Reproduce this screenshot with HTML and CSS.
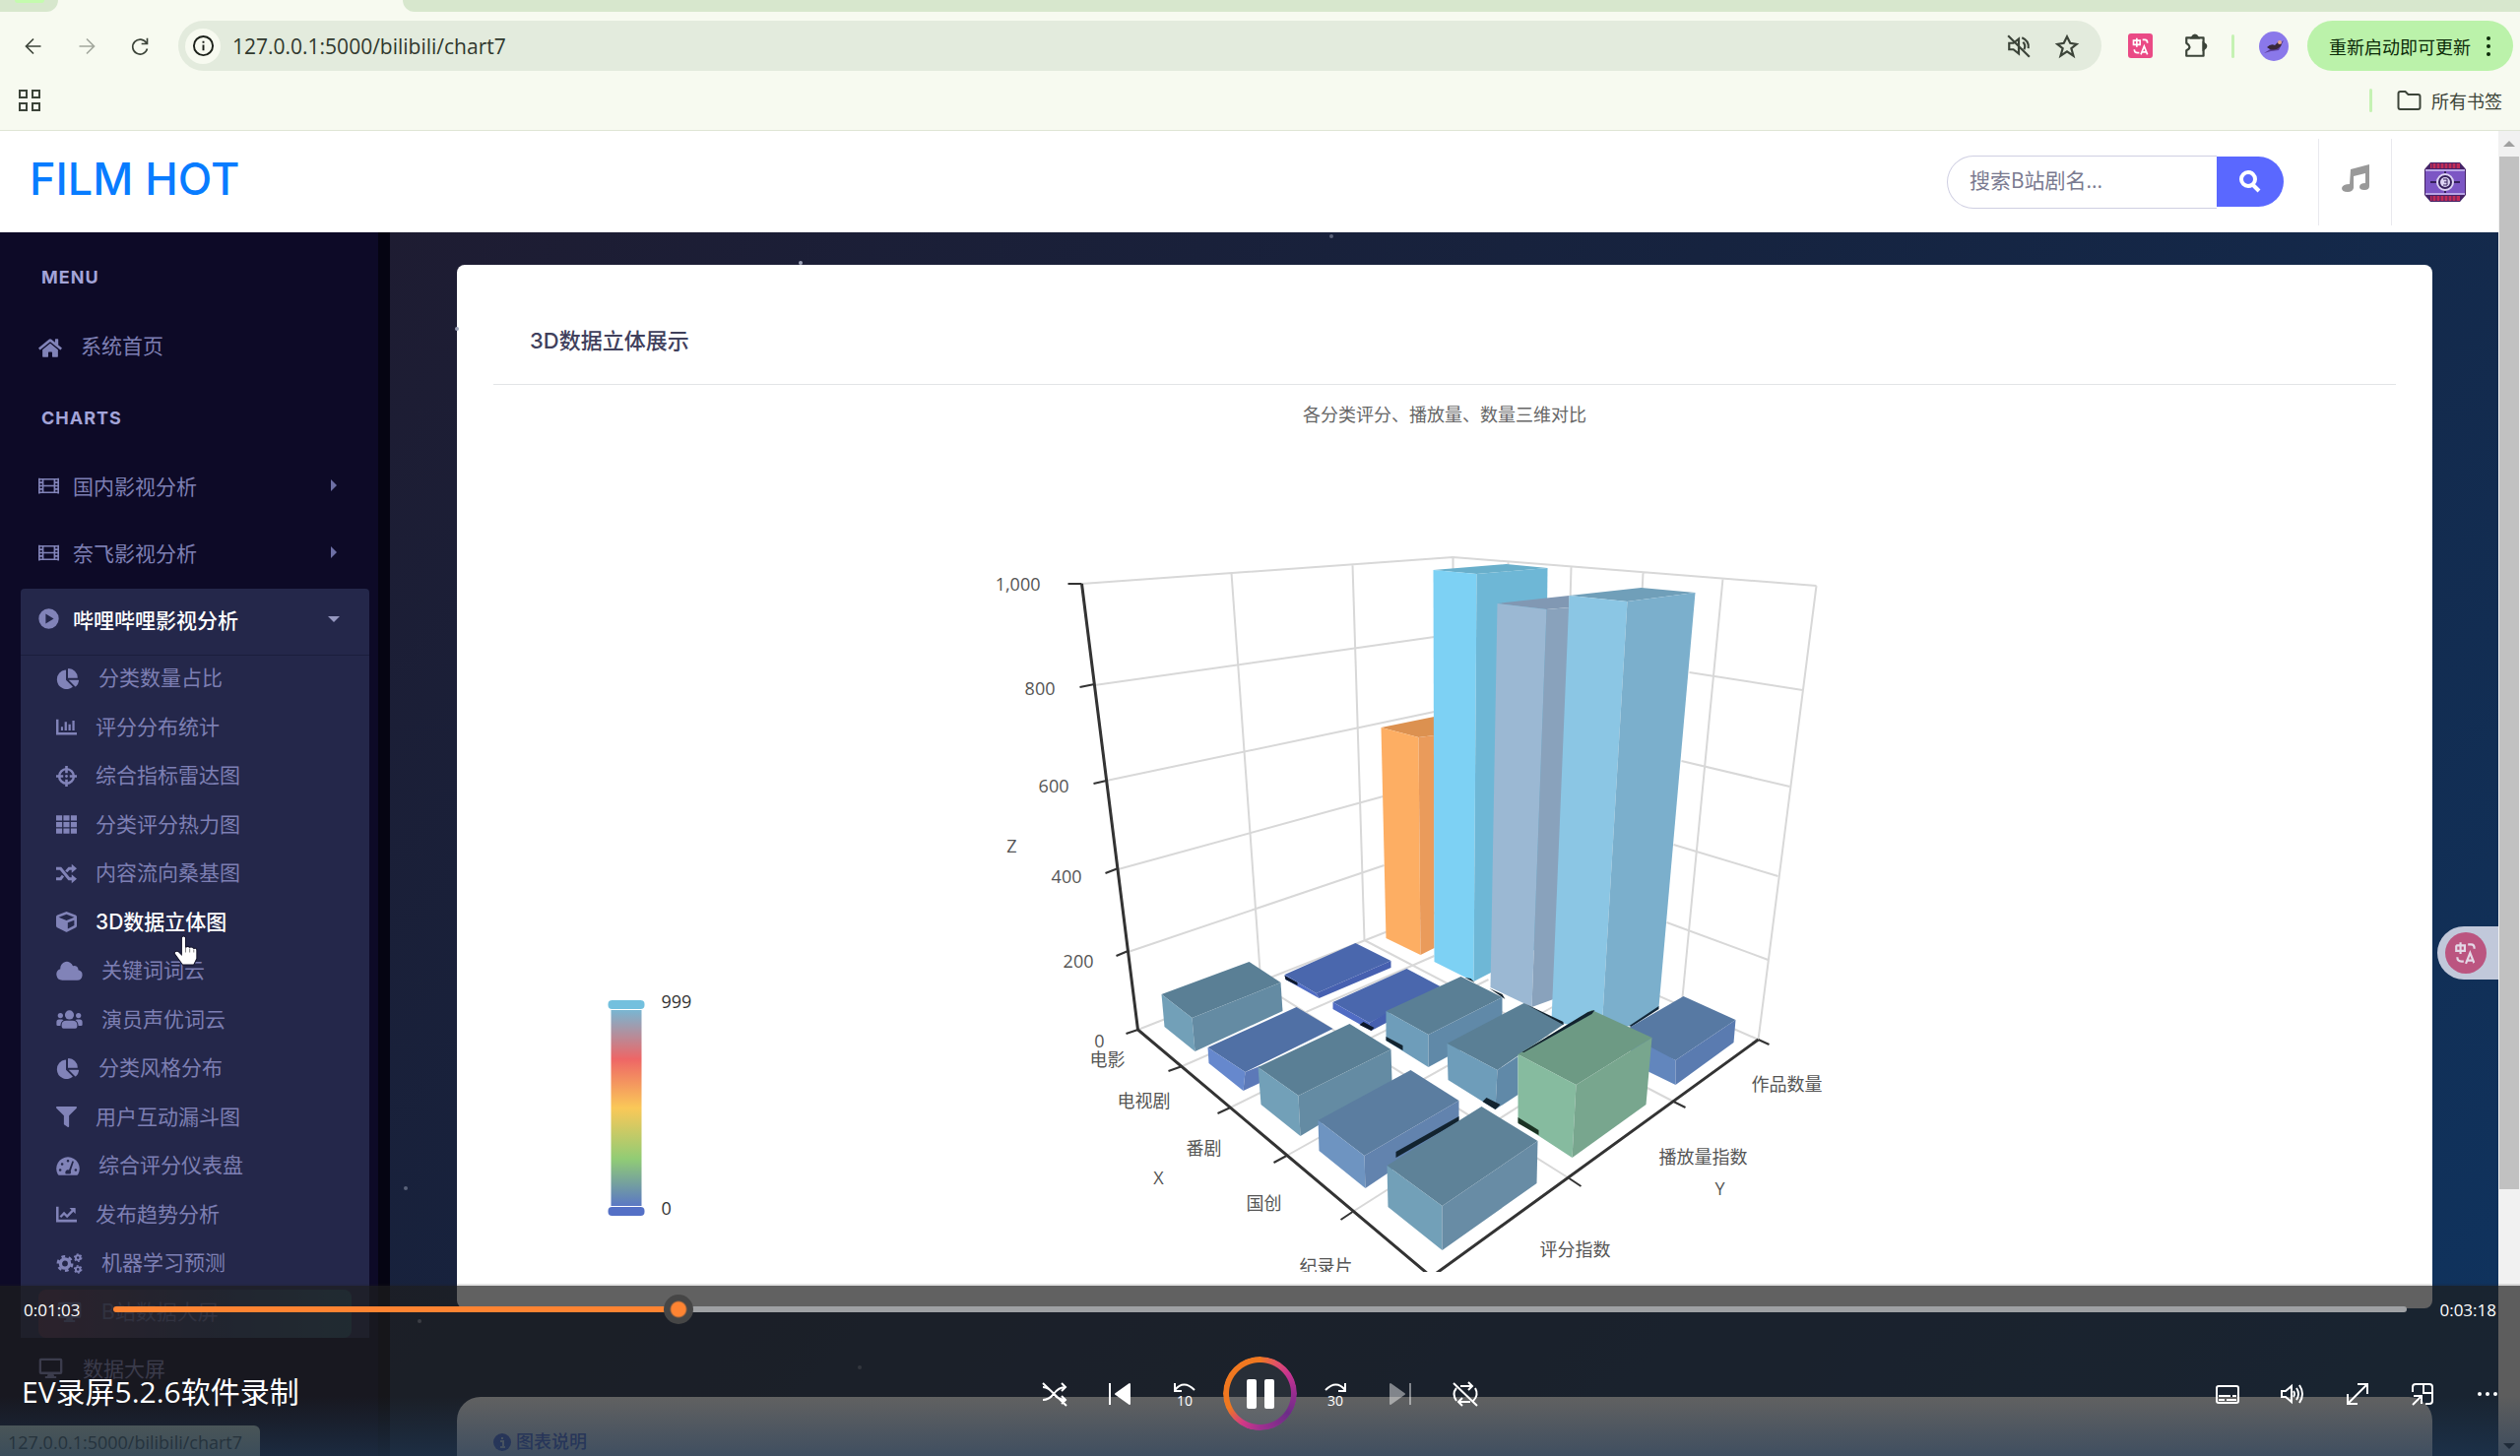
FILE: index.html
```html
<!DOCTYPE html>
<html lang="zh-CN">
<head>
<meta charset="utf-8">
<title>FILM HOT</title>
<link rel="stylesheet" href="styles.css">
</head>
<body>
<svg class="defs" aria-hidden="true">
  <symbol id="home" viewBox="0 0 576 512"><path d="M280 148 96 300v164a16 16 0 0 0 16 16h112a16 16 0 0 0 16-16v-96a16 16 0 0 1 16-16h64a16 16 0 0 1 16 16v96a16 16 0 0 0 16 16h112a16 16 0 0 0 16-16V300L296 148a12 12 0 0 0-16 0zM572 251l-84-69V44a12 12 0 0 0-12-12h-56a12 12 0 0 0-12 12v72l-90-74a48 48 0 0 0-61 0L4 251a12 12 0 0 0-1 17l25 31a12 12 0 0 0 17 2L280 107a12 12 0 0 1 16 0l235 194a12 12 0 0 0 17-2l25-31a12 12 0 0 0-1-17z"/></symbol>
  <symbol id="film" viewBox="0 0 512 512"><path fill="none" stroke="currentColor" stroke-width="40" d="M20 64v384M492 64v384M112 84v344M400 84v344M20 92h472M20 420h472M112 256h288M20 174h92M20 256h92M20 338h92M400 174h92M400 256h92M400 338h92"/></symbol>
  <symbol id="play" viewBox="0 0 512 512"><path fill-rule="evenodd" d="M256 8a248 248 0 1 0 0 496 248 248 0 0 0 0-496zM180 136v240l200-120z"/></symbol>
  <symbol id="pie" viewBox="0 0 544 512"><path d="M528 288H290l158 158c6 6 16 7 22 1a240 240 0 0 0 73-142c2-9-6-17-15-17zM512 223A240 240 0 0 0 289 0c-9-1-17 7-17 16v224h224c9 0 17-8 16-17zM224 288V50c0-9-8-17-17-15A240 240 0 0 0 0 280a240 240 0 0 0 383 184c7-5 8-16 1-22z"/></symbol>
  <symbol id="bar" viewBox="0 0 512 512"><path d="M0 64h60v324h452v60H0zM120 250h50v90h-50zM210 130h56v210h-56zM305 190h56v150h-56zM400 96h56v244h-56z"/></symbol>
  <symbol id="target" viewBox="0 0 512 512"><path d="M256 76a180 180 0 1 0 0 360 180 180 0 0 0 0-360z" fill="none" stroke="currentColor" stroke-width="60"/><path d="M224 0h64v176h-64zM224 336h64v176h-64zM0 224h176v64H0zM336 224h176v64H336z"/><circle cx="256" cy="256" r="34"/></symbol>
  <symbol id="grid" viewBox="0 0 512 512"><path d="M0 32h149v128H0zM181 32h149v128H181zM363 32h149v128H363zM0 192h149v128H0zM181 192h149v128H181zM363 192h149v128H363zM0 352h149v128H0zM181 352h149v128H181zM363 352h149v128H363z"/></symbol>
  <symbol id="shuffle" viewBox="0 0 512 512"><path fill="none" stroke="currentColor" stroke-width="70" d="M0 128h110l210 256h90M0 384h110l60-74M250 204l70-76h90"/><path d="M384 20l128 108-128 108zM384 276l128 108-128 108z"/></symbol>
  <symbol id="cube" viewBox="0 0 512 512"><path fill-rule="evenodd" d="M239 6 31 84a48 48 0 0 0-31 45v225a48 48 0 0 0 27 43l208 104a48 48 0 0 0 43 0l208-104a48 48 0 0 0 26-43V129a48 48 0 0 0-31-45L273 6a48 48 0 0 0-34 0zM256 68l192 72v1l-192 78-192-78v-1zM288 424V276l160-65v133z"/></symbol>
  <symbol id="cloud" viewBox="0 0 640 512"><path d="M538 227A96 96 0 0 0 406 128 160 160 0 0 0 96 200 144 144 0 0 0 144 480h368a128 128 0 0 0 26-253z"/></symbol>
  <symbol id="users" viewBox="0 0 640 512"><circle cx="320" cy="144" r="112"/><circle cx="96" cy="160" r="64"/><circle cx="544" cy="160" r="64"/><path d="M128 432v-45c0-62 50-99 112-99h160c62 0 112 37 112 99v45a48 48 0 0 1-48 48H176a48 48 0 0 1-48-48zM0 384v-64a64 64 0 0 1 64-64h64c18 0 34 7 45 19-40 22-68 60-75 141H32a32 32 0 0 1-32-32zM640 384v-64a64 64 0 0 0-64-64h-64c-18 0-34 7-45 19 40 22 68 60 75 141h66a32 32 0 0 0 32-32z"/></symbol>
  <symbol id="filter" viewBox="0 0 512 512"><path d="M488 0H24C3 0-8 26 7 41l185 185v206c0 8 4 15 10 20l80 55c16 11 38 0 38-19V226L505 41c15-15 4-41-17-41z"/></symbol>
  <symbol id="gauge" viewBox="0 0 576 512"><path fill-rule="evenodd" d="M288 32A288 288 0 0 0 39 464c6 10 17 16 28 16h442c11 0 22-6 28-16A288 288 0 0 0 288 32zM288 96a32 32 0 1 1 0 64 32 32 0 0 1 0-64zM96 384a32 32 0 1 1 0-64 32 32 0 0 1 0 64zM144 240a32 32 0 1 1 0-64 32 32 0 0 1 0 64zM480 384a32 32 0 1 1 0-64 32 32 0 0 1 0 64zM392 138a22 22 0 0 1 38 14l-75 226a64 64 0 0 1-12 70H233a64 64 0 0 1 80-92z"/></symbol>
  <symbol id="line" viewBox="0 0 512 512"><path d="M0 64h62v322h450v62H0z"/><path fill="none" stroke="currentColor" stroke-width="58" d="M106 322l90-92 76 76 140-146"/><path d="M330 96h134c9 0 16 7 16 16v134z"/></symbol>
  <symbol id="gears" viewBox="0 0 640 512"><g fill="none" stroke="currentColor"><circle cx="210" cy="256" r="112" stroke-width="82"/><circle cx="210" cy="256" r="176" stroke-width="62" stroke-dasharray="92 92"/><circle cx="532" cy="112" r="56" stroke-width="48"/><circle cx="532" cy="112" r="88" stroke-width="34" stroke-dasharray="46 46"/><circle cx="532" cy="400" r="56" stroke-width="48"/><circle cx="532" cy="400" r="88" stroke-width="34" stroke-dasharray="46 46"/></g></symbol>
  <symbol id="screen" viewBox="0 0 576 512"><path fill-rule="evenodd" d="M48 16h480a48 48 0 0 1 48 48v300a48 48 0 0 1-48 48H360l16 50h50v50H150v-50h50l16-50H48a48 48 0 0 1-48-48V64a48 48 0 0 1 48-48zM56 72v284h464V72z"/></symbol>
  <symbol id="translate" viewBox="0 0 24 24"><g fill="none" stroke="currentColor" stroke-width="2"><path d="M3 5h8v5H3zM7 2v11M14 4h3q3 0 3 4M4 16q0 4 4 4h2"/><path d="M12 22l4-10 4 10M13 19h6"/></g></symbol>
</svg>

<div class="browser">
  <div class="tabs"><span class="tab-prev"></span><span class="tab-active"></span><span class="tab-rest"></span></div>
  <div class="toolbar">
    <button class="nav-btn" aria-label="后退"><svg viewBox="0 0 24 24"><path d="M21 12H4M12 3l-9 9 9 9"/></svg></button>
    <button class="nav-btn dim" aria-label="前进"><svg viewBox="0 0 24 24"><path d="M3 12h17M12 3l9 9-9 9"/></svg></button>
    <button class="nav-btn" aria-label="刷新"><svg viewBox="0 0 24 24"><path d="M20 8a9 9 0 1 0 1 7M21 2v7h-7"/></svg></button>
    <div class="omnibox">
      <span class="info"><svg viewBox="0 0 24 24"><circle cx="12" cy="12" r="10"/><path d="M12 11v6M12 7v2"/></svg></span>
      <input class="url" aria-label="地址" value="127.0.0.1:5000/bilibili/chart7">
      <button aria-label="静音"><svg viewBox="0 0 24 24"><path d="M2 2l20 20M3 9h4l5-4v14l-5-4H3zM15 4q7 3 6 10M16 8q3 3 1 7"/></svg></button>
      <button aria-label="收藏"><svg viewBox="0 0 24 24"><path d="M12 3l3 6 6 1-5 4 2 7-6-4-6 4 2-7-5-4 6-1z"/></svg></button>
    </div>
    <button class="ext" aria-label="翻译"><svg><use href="#translate"/></svg></button>
    <button class="puzzle" aria-label="扩展程序"><svg viewBox="0 0 24 24"><path d="M3 4h16v17H3v-5q6-3 0-7z" stroke-linejoin="round"/><path d="M8 4q3-5 6 0zM19 9q5 3 0 6z" fill="currentColor"/></svg></button>
    <span class="sep"></span>
    <button class="profile" aria-label="用户"><svg viewBox="0 0 30 30"><circle cx="15" cy="15" r="15" fill="#8a78ea"/><path d="M5 22l8-5 12-8-5 10-8 1z" fill="#5a3e9a"/><path d="M8 16q4-4 8-2l4-4q4 2 2 5-5 5-11 3z" fill="#3a2838"/><circle cx="21" cy="11" r="2" fill="#e6a890"/></svg></button>
    <button class="update"><span>重新启动即可更新</span><svg viewBox="0 0 6 24"><circle cx="3" cy="4" r="2"/><circle cx="3" cy="12" r="2"/><circle cx="3" cy="20" r="2"/></svg></button>
  </div>
  <div class="bookmarks">
    <button class="apps" aria-label="应用"><svg viewBox="0 0 22 22"><path d="M1 1h7v7H1zM14 1h7v7h-7zM1 14h7v7H1zM14 14h7v7h-7z"/></svg></button>
    <span class="sep"></span>
    <button class="all"><svg viewBox="0 0 25 20"><path d="M2 3q0-2 2-2h5l3 3h10q2 0 2 2v11q0 2-2 2H4q-2 0-2-2z"/></svg>所有书签</button>
  </div>
</div>

<div class="viewport">
  <div class="page">
    <header class="header">
      <a class="logo" href="#">FILM HOT</a>
      <form class="search"><input aria-label="搜索" placeholder="搜索B站剧名..."><button type="button" aria-label="搜索"><svg viewBox="0 0 24 24"><circle cx="10" cy="9" r="7"/><path d="M15 15l6 6"/></svg></button></form>
      <a class="music" href="#" aria-label="音乐"><svg viewBox="0 0 28 28"><path d="M9 5 28 0v22q0 4-5 4-5 0-5-3 0-4 6-4V9l-12 3v12q-1 4-6 4-6 0-6-4 1-4 8-4z"/></svg></a>
      <a class="user" href="#" aria-label="个人"><svg viewBox="0 0 42 40"><path d="M6 0h30l6 7v26l-6 7H6l-6-7V7z" fill="#452266"/><path d="M6 1h30v5H6zM6 34h30v5H6z" fill="#c22c58"/><path d="M8 1v5m4-5v5m4-5v5m4-5v5m4-5v5m4-5v5m4-5v5M8 34v5m4-5v5m4-5v5m4-5v5m4-5v5m4-5v5m4-5v5" stroke="#452266"/><path d="M1 7h40v26H1z" fill="#b9a6e6"/><path d="M1 9h40v22H1z" fill="#7c56c4"/><path d="M6 20h30M21 9v22" stroke="#35205c" stroke-width="2"/><circle cx="21" cy="20" r="8" fill="#35205c" stroke="#ddd4f3" stroke-width="2"/><circle cx="21" cy="20" r="5" fill="#ddd4f3"/><path d="M19 17h4v6h-4m1-3h3" stroke="#35205c" fill="none"/></svg></a>
    </header>
    <div class="body">
      <nav class="sidebar">
        <h2>MENU</h2>
        <a class="item home" href="#"><svg class="w24"><use href="#home"/></svg><span>系统首页</span></a>
        <h2>CHARTS</h2>
        <a class="item group" href="#"><svg><use href="#film"/></svg><span>国内影视分析</span><i class="right"></i></a>
        <a class="item group" href="#"><svg><use href="#film"/></svg><span>奈飞影视分析</span><i class="right"></i></a>
        <a class="item group open" href="#"><svg><use href="#play"/></svg><span>哔哩哔哩影视分析</span><i class="down"></i></a>
        <div class="sub">
          <a href="#"><svg class="w24"><use href="#pie"/></svg>分类数量占比</a>
          <a href="#"><svg><use href="#bar"/></svg>评分分布统计</a>
          <a href="#"><svg><use href="#target"/></svg>综合指标雷达图</a>
          <a href="#"><svg><use href="#grid"/></svg>分类评分热力图</a>
          <a href="#"><svg><use href="#shuffle"/></svg>内容流向桑基图</a>
          <a href="#" class="on"><svg><use href="#cube"/></svg>3D数据立体图</a>
          <a href="#"><svg class="w27"><use href="#cloud"/></svg>关键词词云</a>
          <a href="#"><svg class="w27"><use href="#users"/></svg>演员声优词云</a>
          <a href="#"><svg class="w24"><use href="#pie"/></svg>分类风格分布</a>
          <a href="#"><svg><use href="#filter"/></svg>用户互动漏斗图</a>
          <a href="#"><svg class="w24"><use href="#gauge"/></svg>综合评分仪表盘</a>
          <a href="#"><svg><use href="#line"/></svg>发布趋势分析</a>
          <a href="#"><svg class="w27"><use href="#gears"/></svg>机器学习预测</a>
          <a href="#" class="big"><svg class="w27"><use href="#screen"/></svg>B站数据大屏</a>
        </div>
        <a class="item last" href="#"><svg class="w27"><use href="#screen"/></svg><span>数据大屏</span></a>
      </nav>
      <main class="content">
        <span class="star s1"></span><span class="star s2"></span><span class="star s3"></span><span class="star s4"></span><span class="star s5"></span><span class="star s6"></span>
        <section class="card chart-card">
          <h1>3D数据立体展示</h1>
          <p class="subtitle">各分类评分、播放量、数量三维对比</p>
          <svg class="chart" viewBox="501 440 1931 852">
            <defs><linearGradient id="vm" x1="0" y1="0" x2="0" y2="1"><stop offset="0" stop-color="#79b6d2"/><stop offset=".25" stop-color="#ee6666"/><stop offset=".5" stop-color="#fac858"/><stop offset=".76" stop-color="#91cc75"/><stop offset="1" stop-color="#5b78c4"/></linearGradient></defs>
            <rect x="620" y="1026" width="31" height="199" fill="url(#vm)"/>
            <rect x="617" y="1016" width="37" height="9" rx="4" fill="#73c0de"/>
            <rect x="617" y="1226" width="37" height="9" rx="4" fill="#5470c6"/>
            <g class="dark"><text x="671" y="1024">999</text><text x="671" y="1234">0</text></g>
            <g class="grid-lines">
              <path d="M1098 593 1475 566 1844 595M1098 593 1155 1046M1250 582 1280 1000M1373 574 1385 955M1475 566V920M1531 571V700M1595 576 1585 920M1668 582 1648 970M1749 588 1708 1013M1844 595 1785 1056"/>
              <path d="M1111 696 1456 647M1123 793 1456 723M1135 883 1404 809M1145 967 1405 879M1155 1046 1475 920M1715 683 1830 701M1707 773 1817 799M1699 858 1805 890M1692 937 1795 975M1475 920 1785 1056"/>
              <path d="M1200 1083 1456 971M1249 1125 1511 995M1306 1174 1576 1023M1373 1231 1677 1038M1593 1197 1280 1000M1699 1119 1385 955"/>
            </g>
            <g class="axis">
              <path d="M1098 593 1155 1046 1453 1297 1785 1056"/>
              <path class="tick" d="M1084 593h14M1096 698l15-3M1110 796l13-3M1122 887l13-5M1133 971l12-5M1143 1050l12-4M1186 1088l14-5M1236 1131l13-6M1293 1181l13-7M1361 1239l12-8M1796 1061l-11-5M1711 1125l-12-6M1605 1205l-12-8"/>
            </g>
            <g>
              <path fill="#dc9150" d="M1402 739 1456 728V747L1440 749z"/><path fill="#fdae63" d="M1402 739 1440 749 1442 970 1407 953z"/><path fill="#ea9b5b" d="M1440 749 1456 747V963L1442 970z"/>
              <path fill="#69afcb" d="M1455 579 1529 573 1571 577 1499 583z"/><path fill="#7dd1f4" d="M1455 579 1499 583 1496 997 1456 977z"/><path fill="#6eb7d6" d="M1499 583 1571 577 1567 960 1496 997z"/>
              <path fill="#8198b3" d="M1520 613 1593 605V617L1570 619z"/><path fill="#9bb8d3" d="M1520 613 1570 619 1555 1023 1513 1003z"/><path fill="#89a2bc" d="M1570 619 1594 617 1577 1015 1555 1023z"/>
              <path fill="#709fb9" d="M1593 605 1666 597 1721 602 1652 611z"/><path fill="#8bc6e4" d="M1593 605 1652 611 1626 1048 1575 1037z"/><path fill="#7bafcc" d="M1652 611 1721 602 1684 1023 1655 1042 1626 1048z"/><path fill="#12283a" d="M1684 1022v3L1656 1043l-2-1z"/>
              <path fill="#5779a3" d="M1640 1052 1709 1012 1762 1036 1701 1077z"/><path fill="#6286bd" d="M1650 1050 1701 1077V1102L1660 1082z"/><path fill="#5a7bb0" d="M1701 1077 1762 1036 1760 1059 1701 1102z"/>
              <path fill="#4a67ad" d="M1304 990 1376 958 1412 976 1336 1009z"/><path fill="#506cc4" d="M1304 990 1336 1009 1339 1014 1305 995z"/><path fill="#4660b0" d="M1336 1009 1412 976V983L1339 1014z"/><path fill="#0d182c" d="M1304 991 1317 998V1001L1305 995z"/>
              <path fill="#4a67ad" d="M1353 1018 1428 984 1462 1002 1390 1039z"/><path fill="#506cc4" d="M1353 1018 1390 1039 1392 1047 1353 1025z"/><path fill="#4660b0" d="M1390 1039 1411 1027V1037L1392 1047z"/><path fill="#0d182c" d="M1380 1041 1384 1038 1395 1044 1392 1047z"/>
              <path fill="#5a7f95" d="M1407 1027 1483 992 1525 1013 1450 1051z"/><path fill="#6e9dba" d="M1407 1027 1450 1051V1084L1407 1057z"/><path fill="#6089a8" d="M1450 1051 1525 1013V1043L1450 1084z"/><path fill="#12232f" d="M1407 1053 1424 1062V1067L1407 1057zM1487 993l6 1 4 4zM1512 1004l13 6 3 5z"/>
              <path fill="#5a7f95" d="M1469 1060 1547 1019 1588 1040 1520 1087z"/><path fill="#6e9dba" d="M1469 1060 1520 1087 1518 1127 1470 1097z"/><path fill="#6089a8" d="M1520 1087 1541 1073V1112L1518 1127z"/><path fill="#12232f" d="M1505 1119 1509 1115 1523 1122 1518 1127zM1547 1019l40 19v3z"/>
              <path fill="#5a7f95" d="M1179 1010 1268 977 1300 998 1210 1034z"/><path fill="#72a0b8" d="M1179 1010 1210 1034 1213 1068 1182 1043z"/><path fill="#648ba3" d="M1210 1034 1300 998 1302 1027 1213 1068z"/>
              <path fill="#5070a5" d="M1226 1064 1316 1023 1353 1045 1264 1089z"/><path fill="#6688cd" d="M1226 1064 1264 1089 1262 1108 1227 1080z"/><path fill="#5c79b8" d="M1264 1089 1279 1083V1100L1262 1108z"/>
              <path fill="#5a7f95" d="M1277 1084 1370 1040 1412 1066 1318 1113z"/><path fill="#72a0b8" d="M1277 1084 1318 1113 1320 1154 1280 1122z"/><path fill="#648ba3" d="M1318 1113 1412 1066 1413 1098 1320 1154z"/>
              <path fill="#6d9a84" d="M1541 1071 1616 1026 1677 1054 1600 1102z"/><path fill="#86bb9f" d="M1541 1071 1600 1102 1596 1176 1541 1140z"/><path fill="#78a68e" d="M1600 1102 1677 1054 1671 1122 1596 1176z"/><path fill="#12232f" d="M1545 1069 1612 1028 1619 1026 1616 1030 1547 1069z"/><path fill="#1c3324" d="M1541 1135 1562 1148V1153L1541 1141z"/>
              <path fill="#5b7da0" d="M1338 1138 1432 1087 1481 1118 1385 1174z"/><path fill="#6e94c1" d="M1338 1138 1385 1174 1386 1207 1339 1169z"/><path fill="#6283ae" d="M1385 1174 1481 1118V1143L1386 1207z"/><path fill="#12232f" d="M1417 1170 1481 1134V1139L1417 1176z"/>
              <path fill="#5e8298" d="M1408 1184 1504 1124 1561 1159 1464 1225z"/><path fill="#72a0b8" d="M1408 1184 1464 1225V1270L1409 1226z"/><path fill="#688ca5" d="M1464 1225 1561 1159 1560 1202 1464 1270z"/>
            </g>
            <g class="end"><text x="1056" y="600">1,000</text><text x="1071" y="706">800</text><text x="1085" y="805">600</text><text x="1098" y="897">400</text><text x="1110" y="983">200</text><text x="1121" y="1064">0</text></g>
            <g class="mid"><text x="1027" y="866">Z</text><text x="1176" y="1203">X</text><text x="1746" y="1214">Y</text><text x="1124" y="1083">电影</text><text x="1161" y="1125">电视剧</text><text x="1222" y="1173">番剧</text><text x="1283" y="1229">国创</text><text x="1346" y="1293">纪录片</text><text x="1599" y="1276">评分指数</text><text x="1729" y="1182">播放量指数</text><text x="1814" y="1108">作品数量</text></g>
          </svg>
        </section>
        <section class="card note-card"><h3><svg viewBox="0 0 18 18"><circle cx="9" cy="9" r="9" fill="#4e62d8"/><path d="M7 8h3v6m-3 0h5M9 4v2" stroke="#fff" stroke-width="2" fill="none"/></svg>图表说明</h3></section>
      </main>
    </div>
    <button class="float" aria-label="翻译网页"><svg><use href="#translate"/></svg></button>
  </div>
  <div class="scrollbar"><i class="up"></i><div class="track"><div class="thumb"></div></div><i class="dn"></i></div>
</div>

<svg class="cursor" viewBox="0 0 24 30"><path d="M8 2q2-2 4 0v10q2-2 4 0 2-1 4 1 3-1 3 2v8l-3 6H9l-8-11q0-3 4-2l3 3z" fill="#fff" stroke="#15152c"/><path d="M12 12v5M16 13v4M20 14v3" stroke="#888"/></svg>
<div class="status">127.0.0.1:5000/bilibili/chart7</div>

<div class="player">
  <div class="seek"><span class="now">0:01:03</span><input type="range" min="0" max="1000" value="243" aria-label="进度"><span>0:03:18</span></div>
  <div class="controls">
    <strong>EV录屏5.2.6软件录制</strong>
    <div class="buttons">
      <button aria-label="随机"><svg viewBox="0 0 24 24"><path d="M0 1l24 23M0 5q6 0 11 7 5 6 12 6M0 18q6 0 11-6 5-7 12-7M19 1l4 4-4 4M19 14l4 4-4 4"/></svg></button>
      <button aria-label="上一个"><svg viewBox="0 0 24 24"><path d="M2 1v22"/><path class="fill" d="M22 2v20L8 12z"/></svg></button>
      <button aria-label="后退10秒"><svg viewBox="0 0 24 24"><path d="M2 1v8h7M2 8q9-11 20 0"/><text x="12" y="24">10</text></svg></button>
      <button class="pause" aria-label="暂停"><span><svg viewBox="0 0 30 30"><rect x="1" width="10" height="30" rx="2"/><rect x="19" width="10" height="30" rx="2"/></svg></span></button>
      <button aria-label="前进30秒"><svg viewBox="0 0 24 24"><path d="M22 1v8h-7M22 8Q13-3 2 8"/><text x="12" y="24">30</text></svg></button>
      <button class="off" aria-label="下一个"><svg viewBox="0 0 24 24"><path d="M22 1v22"/><path class="fill" d="M2 2v20l14-10z"/></svg></button>
      <button aria-label="循环"><svg viewBox="0 0 24 24"><path d="M0 1l24 23M7 4h11M15 0l4 4-4 4M3 19Q-2 12 3 6M22 6q4 7-2 13M17 20H6M9 16l-4 4 4 4"/></svg></button>
    </div>
    <div class="buttons tail">
      <button aria-label="字幕"><svg viewBox="0 0 24 24"><rect x="1" y="4" width="22" height="17" rx="2"/><path d="M3 14h12M17 14h4M3 18h6M11 18h10"/></svg></button>
      <button aria-label="音量"><svg viewBox="0 0 24 24"><path d="M1 9h4l6-5v16l-6-5H1zM13 9q2 3 0 6M16 6q4 6 0 12M19 3q6 9 0 18"/></svg></button>
      <button aria-label="全屏"><svg viewBox="0 0 24 24"><path d="M2 22 22 2M12 2h10v10M2 12v10h10"/></svg></button>
      <button aria-label="小窗"><svg viewBox="0 0 24 24"><path d="M2 10V5q0-3 3-3h14q3 0 3 3v14q0 3-3 3h-4M13 2v9h9M2 23l8-8M3 14h8v8"/></svg></button>
      <button aria-label="更多"><svg viewBox="0 0 24 24"><g class="fill"><circle cx="4" cy="12" r="1"/><circle cx="12" cy="12" r="1"/><circle cx="20" cy="12" r="1"/></g></svg></button>
    </div>
  </div>
</div>
</body>
</html>
```

FILE: styles.css
```css
* { box-sizing: border-box; }
body { margin: 0; height: 100vh; overflow: hidden; display: flex; flex-direction: column; position: relative; font-family: "Inter", "Noto Sans CJK SC", sans-serif; background: #fff; }
button { border: 0; padding: 0; background: none; color: inherit; font: inherit; display: flex; align-items: center; justify-content: center; }
a { color: inherit; text-decoration: none; }
svg { display: block; flex: none; }
.defs { position: absolute; width: 0; height: 0; }

/* browser chrome */
.browser { flex: none; height: 133px; background: #f7faf0; border-bottom: 1px solid #dfe5d5; font-family: "Open Sans", "Noto Sans CJK SC", sans-serif; color: #3c4439; }
.tabs { display: flex; height: 12px; background: #f7faf0; }
.tab-prev { width: 59px; background: #d7e7cd; border-bottom-right-radius: 12px; }
.tab-prev::before { content: ""; display: block; width: 30px; height: 3px; margin-left: 15px; background: #c4fbae; border-radius: 0 0 8px 8px; }
.tab-active { width: 350px; }
.tab-rest { flex: 1; background: #d7e7cd; border-bottom-left-radius: 12px; }
.toolbar { display: flex; align-items: center; height: 69px; padding: 0 7px; }
.toolbar svg, .bookmarks svg { fill: none; stroke: currentColor; stroke-width: 2; }
.nav-btn { width: 54px; }
.nav-btn svg { width: 20px; height: 20px; }
.nav-btn.dim { opacity: .45; }
.omnibox { flex: 1; display: flex; align-items: center; height: 51px; margin-left: 12px; border-radius: 26px; background: #e3ebdd; padding: 0 11px 0 7px; }
.info { display: flex; align-items: center; justify-content: center; width: 36px; height: 36px; border-radius: 50%; background: #f7faf0; color: #1c211a; }
.info svg { width: 23px; height: 23px; }
.url { flex: 1; margin-left: 12px; padding: 0; border: 0; background: none; font: 21px/30px "Open Sans", sans-serif; color: #30382d; }
.omnibox button { width: 49px; }
.omnibox button svg { width: 26px; height: 26px; }
.ext { width: 25px; height: 25px; margin-left: 27px; border-radius: 3px; background: #ea4a85; color: #fff; }
.ext svg { width: 20px; height: 20px; }
.puzzle { margin-left: 31px; }
.puzzle svg { width: 26px; height: 26px; }
.sep { width: 3px; height: 24px; border-radius: 2px; background: #c5f2b3; }
.toolbar .sep { margin-left: 23px; }
.profile { margin-left: 25px; }
.profile svg { width: 30px; height: 30px; stroke: none; }
.update { width: 209px; height: 51px; margin-left: 19px; border-radius: 26px; background: #bbf2aa; color: #0b2a08; font-size: 18px; gap: 15px; }
.update svg { width: 6px; height: 26px; fill: currentColor; stroke: none; }
.bookmarks { display: flex; align-items: center; height: 42px; padding: 0 18px 0 19px; }
.apps { margin-right: auto; }
.apps svg { width: 22px; height: 22px; }
.all { gap: 10px; margin-left: 24px; font-size: 18px; }
.all svg { width: 26px; height: 20px; }

/* page header */
.viewport { flex: 1; min-height: 0; display: flex; }
.page { flex: 1; min-width: 0; display: flex; flex-direction: column; position: relative; }
.header { flex: none; display: flex; align-items: center; height: 103px; padding-left: 30px; background: #fff; }
.logo { margin-right: auto; padding-bottom: 6px; font-size: 45px; font-weight: 500; line-height: 60px; color: #087cff; }
.search { display: flex; align-items: center; }
.search input { width: 274px; height: 54px; padding: 0 22px 4px; border: 1px solid #cfcfe2; border-right: 0; border-radius: 27px 0 0 27px; font: 21px/30px "Open Sans", "Noto Sans CJK SC", sans-serif; }
.search input::placeholder { color: #7a7a90; opacity: 1; }
.search button { width: 68px; height: 51px; border-radius: 0 26px 26px 0; background: #5a68ff; color: #fff; }
.search svg { width: 24px; height: 24px; fill: none; stroke: currentColor; stroke-width: 4; }
.music { display: flex; align-items: center; justify-content: center; width: 75px; height: 88px; margin-left: 35px; padding-bottom: 8px; border: solid #e9e9ee; border-width: 0 1px; }
.music svg { width: 28px; height: 28px; fill: #999; }
.user { padding: 0 33px; }
.user svg { width: 42px; height: 40px; }
.body { flex: 1; min-height: 0; display: flex; overflow: hidden; }

/* sidebar */
.sidebar { flex: none; width: 396px; padding: 32px 9px 0 21px; border-right: 12px solid #050412; background: #0d0a27; color: #7d7fb3; font-size: 21px; overflow: hidden; }
.sidebar svg { width: 21px; height: 21px; fill: currentColor; color: #8183b8; }
.sidebar svg.w24 { width: 24px; }
.sidebar svg.w27 { width: 27px; }
.sidebar h2 { margin: 0 0 0 21px; font-size: 18px; line-height: 28px; font-weight: 700; letter-spacing: 1px; color: #a3a4d8; }
.item { display: flex; align-items: center; height: 68px; padding: 0 33px 6px 18px; gap: 14px; }
.item.home { height: 115px; padding-bottom: 8px; gap: 19px; }
.item.home svg { margin-top: 8px; }
h2 + .item.group { margin-top: 23px; }
.item i { margin-left: auto; border: 6px solid transparent; }
.item .right { border-left-color: #6d6fa5; border-right-width: 0; }
.item .down { border-top-color: #9698c0; border-bottom-width: 0; }
.item.open { padding-right: 30px; border-radius: 4px 4px 0 0; background: #24274a; border-bottom: 1px solid #1b1d3d; color: #fff; font-weight: 500; }
.sub { display: grid; grid-auto-rows: 1fr; height: 693px; background: #24274a; }
.sub a { display: flex; align-items: center; gap: 19px; margin: 0 18px; padding: 0 0 7px 18px; border-radius: 8px; }
.sub svg { margin-top: 4px; }
.sub .on { color: #fff; font-weight: 500; }
.sub .big { background: linear-gradient(90deg, #4a2c4c, #2c3358 50%, #274a60); color: #5f618f; }
.sub .big svg { color: #5f618f; }
.item.last { padding: 0 0 8px 17px; gap: 19px; }

/* content */
.content { flex: 1; min-width: 0; position: relative; padding: 33px 67px 0 68px; background: linear-gradient(135deg, #1e1c32 0, #16233f 40%, #0f3460 100%); }
.card { background: #fff; }
.chart-card { height: 1060px; padding: 0 37px; border-radius: 8px; }
.chart-card h1 { margin: 0; padding: 61px 37px 28px; border-bottom: 1px solid #e2e4e6; font-size: 22px; line-height: 32px; font-weight: 500; color: #40405c; }
.subtitle { margin: 17px 0 0; text-align: center; font: 18px/26px "Open Sans", "Noto Sans CJK SC", sans-serif; color: #666; }
.chart { width: 100%; height: 852px; margin-top: 6px; font: 18px "Open Sans", "Noto Sans CJK SC", sans-serif; fill: #555; }
.chart .dark { fill: #333; }
.chart .end { text-anchor: end; }
.chart .mid { text-anchor: middle; }
.grid-lines { fill: none; stroke: #d8d8d8; stroke-width: 2; }
.axis { fill: none; stroke: #333; stroke-width: 3; }
.axis .tick { stroke-width: 2; }
.note-card { height: 200px; margin-top: 90px; padding: 33px 37px; border-radius: 24px; }
.note-card h3 { display: flex; align-items: center; gap: 5px; margin: 0; font-size: 18px; line-height: 26px; font-weight: 500; color: #4e62d8; }
.note-card svg { width: 18px; height: 18px; }
.star { position: absolute; width: 4px; height: 4px; border-radius: 50%; background: #9da3b8; }
.s1 { left: 415px; top: 29px; }
.s2 { left: 66px; top: 96px; }
.s3 { left: 954px; top: 2px; opacity: .5; }
.s4 { left: 14px; top: 969px; opacity: .5; }
.s5 { left: 28px; top: 1104px; opacity: .8; }
.s6 { left: 475px; top: 1151px; opacity: .6; }
.float { position: absolute; right: 0; top: 808px; width: 62px; height: 54px; padding-right: 4px; border-radius: 27px 0 0 27px; background: #c1c8da; color: #e3d8e6; }
.float svg { width: 42px; height: 42px; padding: 8px; border-radius: 50%; background: #bb5580; }

.scrollbar { flex: none; width: 22px; display: flex; flex-direction: column; align-items: center; background: #f1f1f1; }
.track { flex: 1; width: 20px; }
.thumb { height: 81%; background: #c1c1c1; }
.scrollbar i { border: 6px solid transparent; }
.scrollbar .up { margin: 4px 0 10px; border-bottom-color: #a0a0a0; }
.scrollbar .dn { margin: 12px 0 1px; border-top-color: #222; }

.cursor { position: absolute; left: 176px; top: 950px; width: 25px; height: 31px; }
.status { position: absolute; left: 0; bottom: 0; height: 31px; padding: 0 18px 0 8px; border-radius: 0 6px 0 0; background: #e0f2d5; color: #44503e; font: 18px/34px "Open Sans", sans-serif; }

/* video player overlay */
.player { position: absolute; left: 0; right: 0; bottom: 0; height: 175px; border-top: 2px solid rgba(30, 30, 30, .12); background: linear-gradient(to bottom, rgba(30, 50, 80, 0) 65%, rgba(30, 60, 95, .5)) padding-box, rgba(30, 30, 30, .7) padding-box; color: #fff; font-family: "Open Sans", "Noto Sans CJK SC", sans-serif; }
.seek { display: flex; align-items: center; height: 48px; padding: 0 24px; font-size: 17px; }
.now { width: 91px; }
.seek input { flex: 1; appearance: none; height: 30px; margin: 0 33px 0 0; background: none; }
.seek input::-webkit-slider-runnable-track { height: 6px; border-radius: 3px; background: linear-gradient(90deg, #ff8432 25%, #9fa1a4 25%); }
.seek input::-webkit-slider-thumb { appearance: none; width: 30px; height: 30px; margin-top: -12px; border-radius: 50%; background: radial-gradient(circle, #ff8432 7px, #464646 9px); }
.controls { display: grid; grid-template-columns: 1fr auto 1fr; align-items: center; height: 123px; }
.controls strong { padding: 0 0 4px 22px; font-size: 30px; line-height: 40px; font-weight: 400; }
.buttons { display: flex; align-items: center; }
.buttons button { width: 66px; height: 66px; }
.buttons svg { width: 24px; height: 24px; fill: none; stroke: #fff; stroke-width: 2; overflow: visible; }
.buttons .fill { fill: #fff; stroke-linejoin: round; }
.buttons text { fill: #fff; stroke: none; font-size: 14px; text-anchor: middle; }
.buttons .off { opacity: .45; }
.buttons .pause { width: 87px; }
.pause span { display: flex; align-items: center; justify-content: center; width: 75px; height: 75px; border: 6px solid transparent; border-radius: 50%; position: relative; background: rgba(255, 255, 255, .06); }
.pause span::before { content: ""; position: absolute; inset: -6px; border-radius: 50%; background: conic-gradient(#f07820, #e0506a 30deg, #c83490 55deg, #982c90 90deg, #6c2c88 125deg, #a03090 180deg, #d03888 210deg, #f07820 245deg); mask: radial-gradient(circle closest-side, transparent 31px, #000 32px); }
.pause svg { width: 30px; height: 30px; fill: #fff; stroke: none; }
.tail { justify-self: end; }
```
